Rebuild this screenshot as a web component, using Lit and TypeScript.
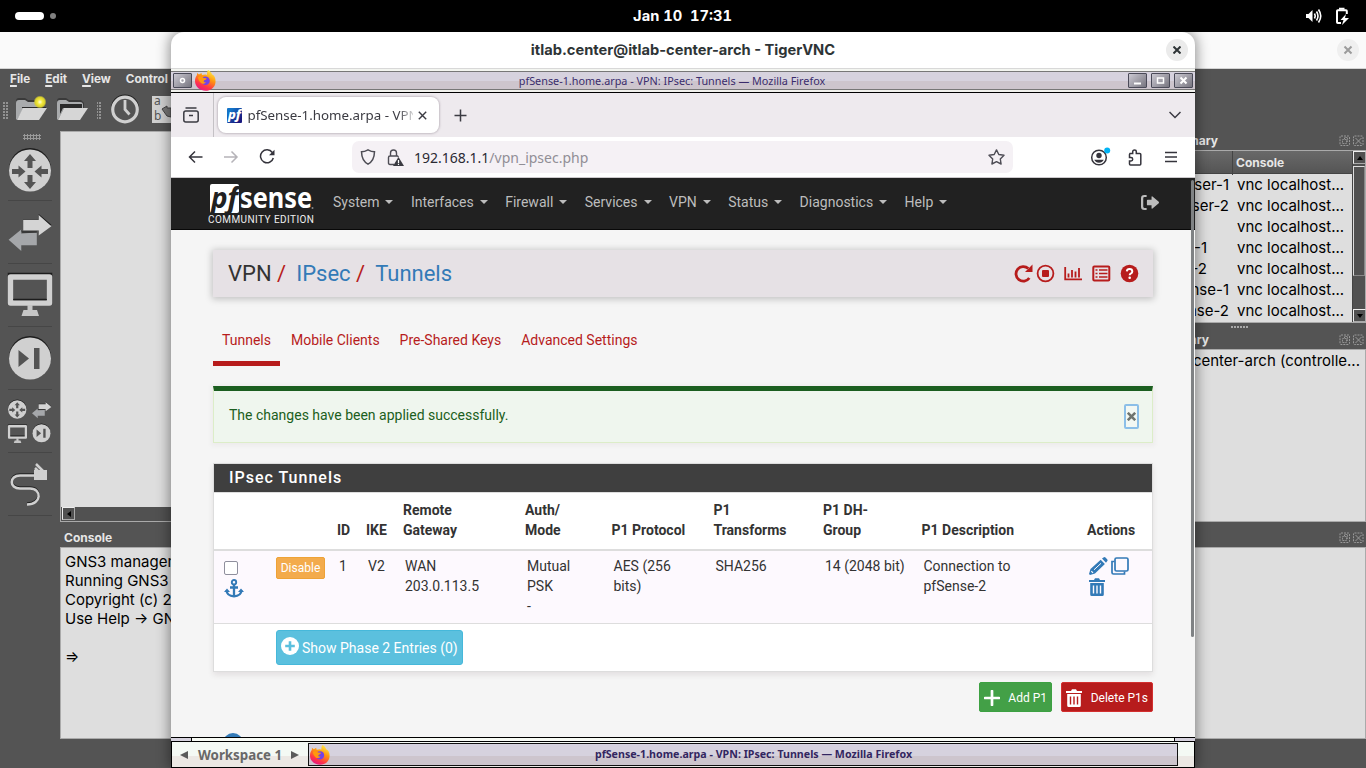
import { LitElement, html, css, svg } from "lit";
import { customElement } from "lit/decorators.js";

const firefoxIcon = html`
  <svg class="firefox" viewBox="0 0 21 21">
    <defs>
      <linearGradient id="flame" x1="0.8" y1="0" x2="0.3" y2="1">
        <stop offset="0" stop-color="#fff44f" />
        <stop offset="0.4" stop-color="#ff980e" />
        <stop offset="0.75" stop-color="#ff3647" />
        <stop offset="1" stop-color="#e31587" />
      </linearGradient>
    </defs>
    <path
      fill="url(#flame)"
      d="M13 0c2 1 3.5 2.500 4 4.500 2 .5 4 3.500 3.500 8-.5 5-5 8.300-10 8.300S0 17 0 11c0-2.500.8-4.500 2-6V3l2 1.500L6.500 3l.5 2c2-.8 4.500-.8 5 0C12 3 12 1.500 13 0z"
    />
    <circle cx="10.500" cy="10.800" r="4.300" fill="#7542e5" />
    <path
      fill="#ff980e"
      d="M3 7c2-.8 4-.5 5.500 1l3 .2c.3 1.400-1.500 1.600-2.500 2.200-.8 1.200.2 2.200 2 1.600-1 2-3.800 2.500-5.500.5C4 11 3 9 3 7z"
    />
  </svg>
`;

const routerShape = svg`
  <circle cx="21" cy="20" r="21" fill="#1c1c1c" />
  <circle cx="21" cy="21.500" r="21" fill="#d0d0d0" />
  <path
    fill="#545454"
    d="M21 5l6 7h-3.500v7h-5v-7H15zM21 40l6-7h-3.500v-7h-5v7H15zM16.500 22.500l-7 6V25H3v-5h6.500v-3.500zM25.500 22.500l7-6V20H39v5h-6.500v3.500z"
  />
`;

const switchShape = svg`
  <path fill="#1c1c1c" d="M15 4h16V-1l13 11-13 9V16H15z" />
  <path fill="#a5a7aa" d="M29 18v13H13v6L0 25.500 13 15v4z" />
  <path fill="#1c1c1c" d="M13 15l1 3h15v-1H13z" />
  <path fill="#d4d4d4" d="M15 5h16V0l13 11.500L31 21v-5H15z" />
`;

const monitorShape = svg`
  <rect x="2.500" y="1.500" width="39" height="26" fill="none" stroke="#1c1c1c" stroke-width="5.500" />
  <rect
    x="2.500"
    y="3"
    width="39"
    height="26"
    fill="none"
    stroke="#d0d0d0"
    stroke-width="5.500"
    stroke-linejoin="round"
  />
  <path fill="#1c1c1c" d="M5.300 25h33.400v1.300H5.300z" />
  <path fill="#c6c6c6" d="M19.500 31h5v5h4.500l2 6H13.500l2-6h4z" />
`;

const deviceShape = svg`
  <circle cx="21" cy="20" r="21" fill="#1c1c1c" />
  <circle cx="21" cy="21.500" r="21" fill="#d0d0d0" />
  <path fill="#545454" d="M9.500 13l10.500 8.500-10.500 8.500zM25 11h5.500v21H25z" />
`;

const floatIcons = html`
  <svg class="float-icons" viewBox="0 0 25 12">
    <g fill="none" stroke="#999" stroke-width="1">
      <rect x="1" y="1" width="9.500" height="9.500" rx="1" stroke-dasharray="2 1" />
      <path d="M3.500 8.500v-4h4v4zM5.500 4V2.500h3V6.500H7.500" stroke-dasharray="1 .6" />
      <rect x="14.500" y="1" width="9.500" height="9.500" rx="1" stroke-dasharray="2 1" />
      <path d="M16.500 3l6 6M22.500 3l-6 6" />
    </g>
  </svg>
`;

@customElement("gns3-window")
export class Gns3Window extends LitElement {
  static styles = css`
    :host {
      display: flex;
      flex-direction: column;
      height: 736px;
      background: #545454;
      color: #000;
      font-family: Inter, "Liberation Sans", sans-serif;
      font-size: 15px;
    }

    * {
      box-sizing: border-box;
    }

    svg {
      display: block;
      flex: none;
      overflow: visible;
    }

    .titlebar {
      height: 37px;
      flex: none;
      background: #fafafa;
      border-bottom: 1px solid #d4d4d4;
      display: flex;
      align-items: center;
      justify-content: flex-end;
      padding-right: 7px;
    }

    .close {
      width: 22px;
      height: 22px;
      border-radius: 50%;
      background: #efefef;
      display: grid;
      place-items: center;
    }

    .menu {
      height: 21px;
      flex: none;
      display: flex;
      gap: 15px;
      padding-left: 10px;
      font-size: 11.700px;
      font-weight: 700;
      line-height: 20px;
      color: #e6e6e6;
    }

    .mnemonic {
      text-decoration: underline;
      text-decoration-thickness: 2px;
      text-underline-offset: 2px;
    }

    .toolbar {
      height: 41px;
      flex: none;
    }

    .body {
      flex: 1;
      min-height: 0;
      display: flex;
    }

    .devices {
      width: 60px;
      display: flex;
      flex-direction: column;
      align-items: center;
    }

    .handle {
      width: 18px;
      height: 6px;
      margin: 3px 0 0 4px;
      background: radial-gradient(circle, #999 1px, transparent 1.100px) 0 0 / 3px 3px;
    }

    .device {
      width: 44px;
      height: 63.100px;
      display: grid;
      place-items: center;
      border-bottom: 1px solid #464646;
    }

    .device:nth-child(2) {
      height: 61px;
    }

    .main {
      flex: 1;
      min-width: 0;
      display: flex;
      flex-direction: column;
    }

    .upper {
      height: 391px;
      display: flex;
    }

    .scene {
      flex: 1;
      display: flex;
      flex-direction: column;
      justify-content: flex-end;
      background: #dedede;
      border: 1px solid #aaa;
    }

    .hscroll {
      height: 14px;
      background: #515151;
      padding: 0 1px;
    }

    .arrow {
      width: 13px;
      height: 13px;
      border: 1px solid #eee;
      border-right-color: #aaa;
      border-bottom-color: #aaa;
      display: grid;
      place-items: center;
      color: #1d1d1d;
    }

    .docks {
      width: 266px;
      display: flex;
      flex-direction: column;
    }

    .dock-title {
      height: 19px;
      display: flex;
      align-items: center;
      justify-content: space-between;
      color: #e6e6e6;
      font-size: 12px;
      font-weight: 700;
      padding-right: 2px;
    }

    .dock-title .name {
      width: 118px;
      text-align: right;
    }

    .dock-title .name.servers {
      width: 109px;
    }

    .float-icons {
      width: 25px;
      height: 12px;
    }

    .topology {
      height: 173px;
      display: flex;
      border: 1px solid #aaa;
      background: #dedede;
    }

    .nodes {
      flex: 1;
      overflow: hidden;
    }

    .columns {
      height: 23px;
      display: grid;
      grid-template-columns: 131px 1fr;
      background: linear-gradient(#696969, #555);
      border-bottom: 1px solid #444;
      color: #e6e6e6;
      font-size: 12px;
      font-weight: 700;
      line-height: 24px;
    }

    .columns .console-head {
      border-left: 1px solid #444;
      padding-left: 3px;
    }

    .node {
      height: 21px;
      display: grid;
      grid-template-columns: 128px 1fr;
      gap: 8px;
      line-height: 21px;
      white-space: nowrap;
    }

    .node .label {
      text-align: right;
    }

    .node .label.inset {
      padding-right: 22px;
    }

    .vscroll {
      width: 13px;
      background: #515151;
      border-left: 1px solid #444;
      display: flex;
      flex-direction: column;
      gap: 2px;
    }

    .thumb {
      height: 110px;
      border: 1px solid #ddd;
      border-right-color: #888;
      border-bottom-color: #888;
    }

    .vscroll .arrow:last-child {
      margin-top: auto;
    }

    .splitter {
      height: 7px;
      margin-left: 131px;
      padding-top: 3px;
    }

    .splitter i {
      display: block;
      width: 17px;
      height: 2px;
      background: repeating-linear-gradient(90deg, #aaa 0 2px, transparent 2px 3px);
    }

    .servers-list {
      flex: 1;
      border: 1px solid #aaa;
      background: #dedede;
      line-height: 22px;
      text-align: right;
      padding-right: 5px;
    }

    .console-title {
      height: 25px;
      padding: 6px 2px 0 4px;
      display: flex;
      justify-content: space-between;
      align-items: center;
      color: #e6e6e6;
      font-size: 12px;
      font-weight: 700;
    }

    .console {
      height: 192px;
      border: 1px solid #aaa;
      background: #dedede;
      padding: 4px;
      line-height: 19px;
      white-space: pre;
    }
  `;

  private nodes = [
    ["User-1", ""],
    ["User-2", ""],
    ["", ""],
    ["WAN-1", "inset"],
    ["WAN-2", "inset"],
    ["pfSense-1", ""],
    ["pfSense-2", ""],
  ];

  private renderToolbar() {
    return html`
      <svg class="toolbar" width="171" height="41" viewBox="0 0 171 41">
        <defs>
          <pattern id="dots" width="3" height="3" patternUnits="userSpaceOnUse">
            <rect width="2" height="2" fill="#929292" />
          </pattern>
          <radialGradient id="glow">
            <stop offset="0" stop-color="#fffde0" />
            <stop offset="0.4" stop-color="#f3e93c" />
            <stop offset="0.75" stop-color="#d8cf2e" />
            <stop offset="1" stop-color="#d8cf2e" stop-opacity="0" />
          </radialGradient>
        </defs>
        <rect x="3" y="11" width="5" height="18" fill="url(#dots)" />
        <rect x="97" y="11" width="5" height="18" fill="url(#dots)" />
        <path fill="#3a3a3a" d="M16 11q0-3 3-3h6l3 2h11l3 3v6H24L16 28z" />
        <path fill="#a9abad" d="M16 13q0-3 3-3h6l3 2h10q3 0 3 3v3H24l-7 12-1-1z" />
        <path fill="#2a2a2a" d="M22 17h24v1H22z" />
        <path fill="#d6d6d6" d="M23 18h24l-8 12H17z" />
        <circle cx="40" cy="12" r="6.500" fill="url(#glow)" />
        <path fill="#3a3a3a" d="M57 11q0-3 3-3h6l3 2h12l3 3v5H66L57 28z" />
        <path fill="#a9abad" d="M57 13q0-3 3-3h6l3 2h11q3 0 3 3v3H64l-6 12-1-1z" />
        <path fill="#2a2a2a" d="M60 14h22v4H63l-3 6z" />
        <path fill="#d6d6d6" d="M64 18h24l-8 12H58z" />
        <circle cx="125" cy="18.500" r="14" fill="#1e1e1e" />
        <circle cx="125" cy="19.500" r="12.300" fill="#545454" stroke="#d0d0d0" stroke-width="3.200" />
        <path d="M125 10v9.500l4.500 5" fill="none" stroke="#d0d0d0" stroke-width="2.800" />
        <path fill="#d0d0d0" d="M152 6h19v27h-19z" />
        <g fill="#555" font-family="Noto Sans" font-size="12">
          <text x="154" y="14.500">a</text>
          <text x="154" y="30">b</text>
        </g>
        <path fill="#777" stroke="#444" d="M162 19l5-3v2h4v9l-4-1z" />
      </svg>
    `;
  }

  render() {
    return html`
      <div class="titlebar">
        <div class="close">
          <svg width="8" height="8" viewBox="0 0 8 8">
            <path d="M.5.5l7 7M7.500.5l-7 7" stroke="#9b9b9b" stroke-width="2" />
          </svg>
        </div>
      </div>
      <div class="menu">
        <span><span class="mnemonic">F</span>ile</span>
        <span><span class="mnemonic">E</span>dit</span>
        <span><span class="mnemonic">V</span>iew</span>
        <span>Control</span>
      </div>
      ${this.renderToolbar()}
      <div class="body">
        <div class="devices">
          <div class="handle"></div>
          <div class="device">
            <svg width="42" height="43" viewBox="0 0 42 43">${routerShape}</svg>
          </div>
          <div class="device">
            <svg width="44" height="35" viewBox="0 0 44 36">${switchShape}</svg>
          </div>
          <div class="device">
            <svg width="44" height="42" viewBox="0 0 44 42">${monitorShape}</svg>
          </div>
          <div class="device">
            <svg width="42" height="43" viewBox="0 0 42 43">${deviceShape}</svg>
          </div>
          <div class="device">
            <svg width="44" height="43" viewBox="0 0 44 43">
              <g transform="translate(0 0) scale(.44)">${routerShape}</g>
              <g transform="translate(24 2) scale(.44)">${switchShape}</g>
              <g transform="translate(0 25) scale(.43)">${monitorShape}</g>
              <g transform="translate(24.500 24) scale(.43)">${deviceShape}</g>
            </svg>
          </div>
          <div class="device">
            <svg width="44" height="44" viewBox="0 0 44 44">
              <path
                d="M27 12.500H12c-11 0-11 13 0 13h10c12 0 12 16-3 16"
                fill="none"
                stroke="#222"
                stroke-width="2.500"
              />
              <path
                d="M27 13.500H12c-11 0-11 13 0 13h10c12 0 12 16-3 16M28 2l7 7M27 6l4 4"
                fill="none"
                stroke="#d0d0d0"
                stroke-width="2.500"
              />
              <path fill="#d0d0d0" d="M26 8h13v10H26z" />
            </svg>
          </div>
        </div>
        <div class="main">
          <div class="upper">
            <div class="scene">
              <div class="hscroll">
                <div class="arrow">
                  <svg width="4" height="6"><path d="M4 0v6L0 3z" /></svg>
                </div>
              </div>
            </div>
            <div class="docks">
              <div class="dock-title">
                <span class="name">Topology Summary</span>
                ${floatIcons}
              </div>
              <div class="topology">
                <div class="nodes">
                  <div class="columns">
                    <span></span>
                    <span class="console-head">Console</span>
                  </div>
                  ${this.nodes.map(
                    ([name, align]) => html`
                      <div class="node">
                        <span class="label ${align}">${name}</span>
                        <span>vnc localhost...</span>
                      </div>
                    `
                  )}
                </div>
                <div class="vscroll">
                  <div class="arrow">
                    <svg width="6" height="4"><path d="M0 4h6L3 0z" /></svg>
                  </div>
                  <div class="thumb"></div>
                  <div class="arrow">
                    <svg width="6" height="4"><path d="M0 0h6L3 4z" /></svg>
                  </div>
                </div>
              </div>
              <div class="splitter"><i></i></div>
              <div class="dock-title">
                <span class="name servers">Servers Summary</span>
                ${floatIcons}
              </div>
              <div class="servers-list">itlab-center-arch (controlle...</div>
            </div>
          </div>
          <div class="console-title">
            <span>Console</span>
            ${floatIcons}
          </div>
          <div class="console">GNS3 management
Running GNS3 version
Copyright (c) 2006
Use Help → GNS3

⇒</div>
        </div>
      </div>
    `;
  }
}

@customElement("pfsense-page")
export class PfsensePage extends LitElement {
  static styles = css`
    :host {
      display: block;
      height: 559px;
      overflow: hidden;
      position: relative;
      background: #f5f5f5;
      color: #333;
      font-family: Roboto, "Liberation Sans", sans-serif;
      font-size: 14px;
      line-height: 20px;
    }

    * {
      box-sizing: border-box;
    }

    svg {
      display: block;
      flex: none;
    }

    .navbar {
      height: 52px;
      background: #212121;
      border-bottom: 1px solid #080808;
      display: flex;
      align-items: center;
      padding: 0 36px 3px 37px;
      color: #bdbdbd;
    }

    .logo {
      width: 107px;
      margin: 5px 18px 0 0;
      overflow: visible;
    }

    .menu {
      display: flex;
      gap: 17.450px;
      flex: 1;
    }

    .entry {
      display: flex;
      align-items: center;
      gap: 6px;
    }

    .caret {
      border: 4px solid transparent;
      border-top-color: #bdbdbd;
      border-bottom: 0;
    }

    .content {
      padding: 20px 42px 0;
    }

    .header {
      height: 47px;
      padding: 0 14px 0 15px;
      display: flex;
      align-items: center;
      justify-content: space-between;
      background: #e6e1e5;
      box-shadow: 0 1px 7px 1px rgba(0, 0, 0, 0.22);
      font-size: 22px;
    }

    .crumbs {
      display: flex;
    }

    .crumbs a {
      color: #337ab7;
      margin-left: 10px;
    }

    .slash {
      color: #b71c1c;
      margin-left: 5.500px;
    }

    .tabs {
      display: flex;
      margin-top: 33px;
      gap: 2px;
      color: #b71c1c;
    }

    .tab {
      height: 36px;
      padding: 0 9px;
    }

    .tab.active {
      border-bottom: 5px solid #b71c1c;
    }

    .alert {
      margin-top: 20px;
      height: 57px;
      padding: 13px 13px 0 15px;
      display: flex;
      align-items: flex-start;
      justify-content: space-between;
      background: #eff6ee;
      border: 1px solid #dcedc8;
      border-top: 5px solid #1b5e20;
      box-shadow: 0 1px 5px 2px rgba(60, 0, 30, 0.04);
      color: #1b5e20;
    }

    .message {
      padding-top: 1px;
    }

    .dismiss {
      width: 15px;
      height: 25px;
      border: 2px solid #8cbfe8;
      border-radius: 2px;
      background: #f3f8f3;
      display: grid;
      place-items: center;
    }

    .panel {
      margin-top: 20px;
      height: 209px;
      background: #fff;
      border: 1px solid #ddd;
      box-shadow: 0 3px 6px rgba(40, 0, 20, 0.09);
    }

    .panel-title {
      height: 29px;
      padding: 4px 15px;
      background: #3f3f3f;
      border-bottom: 1px solid #ddd;
      color: #fff;
      font-size: 16px;
      font-weight: 500;
      letter-spacing: 1px;
      line-height: 19px;
    }

    .row {
      display: grid;
      grid-template-columns: 52px 61px 29px 37px 122px 86.500px 102px 109.500px 98.500px 165.500px 1fr;
      padding-left: 10px;
    }

    .head {
      height: 58px;
      padding-bottom: 9px;
      align-items: end;
      border-bottom: 2px solid #ddd;
      font-weight: 700;
    }

    .tunnel {
      height: 73px;
      padding-top: 5px;
      background: #fdf9fe;
      border-bottom: 1px solid #ddd;
    }

    .text {
      padding-left: 2px;
    }

    .checkbox {
      width: 14px;
      height: 14px;
      margin: 5px 0 4px;
      border: 1px solid #8f8f9d;
      border-radius: 2px;
      background: #fff;
    }

    .disable {
      width: 49px;
      height: 22px;
      margin-top: 1px;
      border: 1px solid #eea236;
      border-radius: 2px;
      background: #f3ab4c;
      color: #fff;
      font-size: 12px;
      text-align: center;
    }

    .actions {
      display: flex;
      flex-wrap: wrap;
      align-content: flex-start;
      gap: 3px;
      width: 44px;
      padding: 1px 0 0 2px;
      color: #337ab7;
    }

    .phase2 {
      width: 187px;
      height: 35px;
      margin: 6px 0 0 62px;
      padding: 0 5px 0 4px;
      display: flex;
      align-items: center;
      gap: 3px;
      border: 1px solid #46b8da;
      border-radius: 3px;
      background: #5bc0de;
      color: #fff;
      white-space: nowrap;
    }

    .phase2 svg {
      margin-bottom: 3px;
    }

    .buttons {
      display: flex;
      justify-content: flex-end;
      gap: 9px;
      margin-top: 10px;
    }

    .button {
      height: 30px;
      padding: 2px 4px 0;
      display: flex;
      align-items: center;
      justify-content: space-between;
      border-radius: 2px;
      color: #fff;
      font-size: 12px;
    }

    .add {
      width: 73px;
      background: #43a047;
      border: 1px solid #3da142;
    }

    .delete {
      width: 92px;
      background: #b71c1c;
      border: 1px solid #d32f2f;
    }

    .info {
      width: 20px;
      height: 20px;
      margin: 21px 0 0 10px;
      border-radius: 50%;
      background: #337ab7;
    }

    .scrollbar {
      position: absolute;
      right: 1px;
      top: 2px;
      width: 3px;
      height: 457px;
      border-radius: 2px;
      background: #7f8284;
    }
  `;

  private menu = [
    "System",
    "Interfaces",
    "Firewall",
    "Services",
    "VPN",
    "Status",
    "Diagnostics",
    "Help",
  ];

  private renderLogo() {
    return html`
      <svg class="logo" height="42" viewBox="0 0 107 42">
        <path fill="#fff" d="M2 2q0-2 2-2h25q2 0 2 2v25q0 2-2 2H4q-2 0-2-2z" />
        <g font-family="Noto Sans" font-weight="700">
          <text
            x="3"
            y="23.500"
            fill="#212121"
            font-size="28"
            font-style="italic"
            textLength="27"
            lengthAdjust="spacingAndGlyphs"
          >pf</text>
          <text
            x="32"
            y="24"
            fill="#fff"
            font-size="29"
            textLength="72"
            lengthAdjust="spacingAndGlyphs"
          >sense</text>
        </g>
        <circle cx="104.500" cy="24" r="1" fill="#888" />
        <text
          x="0"
          y="39"
          fill="#eee"
          font-family="Roboto"
          font-size="10"
          textLength="106"
        >COMMUNITY EDITION</text>
      </svg>
    `;
  }

  private renderHeaderIcons() {
    return html`
      <svg width="125" height="19" viewBox="0 0 125 19" fill="none" stroke="#b71c1c">
        <path d="M14.300 4.500a7.300 7.300 0 1 0 1 9.500" stroke-width="2.800" />
        <path d="M18.500.500v7.500H11z" fill="#b71c1c" stroke="none" />
        <circle cx="31.500" cy="9.500" r="7.900" stroke-width="1.800" />
        <rect x="28" y="6" width="7" height="7" rx="1" fill="#b71c1c" stroke="none" />
        <path
          d="M51.200 3v12.300H68M54.500 13.500V9.500M58 13.500V6M61.500 13.500V7.500M65 13.500V4"
          stroke-width="1.800"
        />
        <rect x="79.300" y="2.500" width="16" height="14" rx="1" stroke-width="2" />
        <path d="M81.500 6h2M81.500 9.500h2M81.500 13h2M85 6h8.500M85 9.500h8.500M85 13h8.500" stroke-width="1.700" />
        <circle cx="115.500" cy="9.500" r="8.800" fill="#b71c1c" stroke="none" />
        <path
          d="M112.800 7.300q.3-2.300 2.700-2.300 2.800 0 2.800 2.400 0 1.400-1.600 2.200-1 .5-1 1.600"
          stroke="#fff"
          stroke-width="2"
        />
        <circle cx="115.700" cy="13.700" r="1.300" fill="#fff" stroke="none" />
      </svg>
    `;
  }

  private renderTrash(slots: string) {
    return html`
      <svg width="16" height="18" viewBox="0 0 16 18">
        <path fill="currentColor" d="M0 2h5l1-1.800h4L11 2h5v2H0zM1.200 5h13.600v11.500q0 1.500-1.500 1.500H2.700q-1.500 0-1.500-1.500z" />
        <path d="M4.500 7.500v8M8 7.500v8M11.500 7.500v8" stroke=${slots} stroke-width="1.400" />
      </svg>
    `;
  }

  render() {
    return html`
      <div class="navbar">
        ${this.renderLogo()}
        <div class="menu">
          ${this.menu.map(
            (name) => html`<span class="entry">${name}<i class="caret"></i></span>`
          )}
        </div>
        <svg width="18" height="17" viewBox="0 0 512 512" preserveAspectRatio="none">
          <path
            fill="#bdbdbd"
            d="M300 92q0-34 27-14L505 235q14 20 0 40L327 434q-27 20-27-14v-78H190q-22 0-22-22V192q0-22 22-22h110zM160 32v62H96q-32 0-32 34v256q0 34 32 34h64v62H96Q0 480 0 384V128Q0 32 96 32z"
          />
        </svg>
      </div>
      <div class="content">
        <div class="header">
          <div class="crumbs">
            <span>VPN</span><span class="slash">/</span><a>IPsec</a
            ><span class="slash">/</span><a>Tunnels</a>
          </div>
          ${this.renderHeaderIcons()}
        </div>
        <div class="tabs">
          <span class="tab active">Tunnels</span>
          <span class="tab">Mobile Clients</span>
          <span class="tab">Pre-Shared Keys</span>
          <span class="tab">Advanced Settings</span>
        </div>
        <div class="alert">
          <span class="message">The changes have been applied successfully.</span>
          <div class="dismiss">
            <svg width="9" height="9" viewBox="0 0 9 9">
              <path d="M.8.8l7.400 7.400M8.200.8L.8 8.200" stroke="#6f746f" stroke-width="2.600" />
            </svg>
          </div>
        </div>
        <div class="panel">
          <div class="panel-title">IPsec Tunnels</div>
          <div class="row head">
            <span></span>
            <span></span>
            <span>ID</span>
            <span>IKE</span>
            <span>Remote<br />Gateway</span>
            <span>Auth/<br />Mode</span>
            <span>P1 Protocol</span>
            <span>P1<br />Transforms</span>
            <span>P1 DH-<br />Group</span>
            <span>P1 Description</span>
            <span>Actions</span>
          </div>
          <div class="row tunnel">
            <div>
              <div class="checkbox"></div>
              <svg width="20" height="19" viewBox="0 0 20 19" fill="none" stroke="#337ab7">
                <circle cx="10" cy="3.200" r="2.200" stroke-width="1.900" />
                <path d="M10 5.500v12M6 8.500h8" stroke-width="2.300" />
                <path d="M2.500 11.500q.5 5.500 7.500 5.800 7-.3 7.500-5.800" stroke-width="2.300" />
                <path d="M0 13l3-3.500L6 13zM14 13l3-3.500 3 3.500z" fill="#337ab7" stroke="none" />
              </svg>
            </div>
            <div class="disable">Disable</div>
            <span class="text">1</span>
            <span class="text">V2</span>
            <span class="text">WAN<br />203.0.113.5</span>
            <span class="text">Mutual<br />PSK<br />-</span>
            <span class="text">AES (256<br />bits)</span>
            <span class="text">SHA256</span>
            <span class="text">14 (2048 bit)</span>
            <span class="text">Connection to<br />pfSense-2</span>
            <div class="actions">
              <svg width="19" height="18" viewBox="0 0 19 18">
                <path
                  fill="currentColor"
                  d="M11.700 2.700l4.200 4.200L6 16.500 1 18 0 17l1.500-5zM13 1.500L14.500.4q1-.8 2 .2l1.600 1.600q1 1 0 2L17 5.700z"
                />
                <path d="M5 12.800L12 6.300" stroke="#fdf9fe" stroke-width="1" />
                <path d="M2.300 14.200l1.700 1.700" stroke="#fdf9fe" stroke-width="1.200" />
              </svg>
              <svg width="18" height="18" viewBox="0 0 18 18" fill="none" stroke="currentColor" stroke-width="1.700">
                <rect x="4" y="1" width="13" height="13" rx="1.500" />
                <path d="M3.500 4.500H1v11q0 1.500 1.500 1.500h11v-2.500" />
              </svg>
              ${this.renderTrash("#fdf9fe")}
            </div>
          </div>
          <div class="phase2">
            <svg width="18" height="18" viewBox="0 0 18 18">
              <circle cx="9" cy="9" r="9" fill="#fff" />
              <path d="M9 4.200v9.600M4.200 9h9.600" stroke="#5bc0de" stroke-width="2.600" />
            </svg>
            Show Phase 2 Entries (0)
          </div>
        </div>
        <div class="buttons">
          <div class="button add">
            <svg width="16" height="16" viewBox="0 0 16 16">
              <path d="M8 1v14M1 8h14" stroke="#fff" stroke-width="2.700" stroke-linecap="round" />
            </svg>
            Add P1
          </div>
          <div class="button delete">${this.renderTrash("#b71c1c")} Delete P1s</div>
        </div>
        <div class="info"></div>
      </div>
      <div class="scrollbar"></div>
    `;
  }
}

@customElement("vnc-window")
export class VncWindow extends LitElement {
  static styles = css`
    :host {
      display: flex;
      flex-direction: column;
      width: 1024px;
      height: 736px;
      border-radius: 13px 13px 0 0;
      background: #fff;
      box-shadow: 0 0 14px 1px rgba(0, 0, 0, 0.45);
      font-family: "Noto Sans", sans-serif;
    }

    * {
      box-sizing: border-box;
    }

    svg {
      display: block;
      flex: none;
    }

    .titlebar {
      height: 37px;
      padding: 0 7px 1px 29px;
      display: flex;
      align-items: center;
      border-bottom: 1px solid #d8d8d8;
      color: #2e3436;
      font-family: Inter, sans-serif;
      font-size: 14.670px;
      font-weight: 700;
    }

    .title {
      flex: 1;
      text-align: center;
    }

    .close {
      width: 22px;
      height: 22px;
      border-radius: 50%;
      background: #ebebeb;
      display: grid;
      place-items: center;
    }

    .wm {
      height: 24px;
      border-top: 2px solid #f3f5f0;
      border-bottom: 1px solid #000;
      background: #f0f0ec;
      padding-bottom: 2px;
    }

    .wm-bar {
      height: 19px;
      border-top: 1px solid #777;
      border-bottom: 1px solid #777;
      background: linear-gradient(#d6d2de 0 9px, #cdc5cd 9px);
      display: flex;
      align-items: center;
      padding: 0 2px;
      gap: 4px;
    }

    .wm-bar .firefox {
      margin-left: -1px;
    }

    .wm-title {
      flex: 1;
      text-align: center;
      color: #3a2c6c;
      font-size: 10.830px;
      line-height: 17px;
    }

    .wm-button {
      width: 19px;
      height: 15px;
      border: 1px solid #4a4a58;
      border-radius: 1px;
      background: linear-gradient(135deg, #cbc9d2, #77757f);
      display: grid;
      place-items: center;
    }

    .firefox {
      width: 21px;
      height: 21px;
    }

    .tabstrip {
      height: 44px;
      background: #eeeaee;
      display: flex;
      align-items: center;
      color: #3b3b42;
    }

    .recent {
      width: 43px;
      height: 44px;
      padding-left: 12px;
      border-right: 1px solid #c4c1c5;
      display: flex;
      align-items: center;
    }

    .tab {
      width: 221px;
      height: 36px;
      margin: 0 15px 0 4px;
      padding: 0 12px 0 9px;
      border-radius: 8px;
      background: #fff;
      box-shadow: 0 0 2px 1px rgba(120, 110, 120, 0.35);
      display: flex;
      align-items: center;
      gap: 5.500px;
      font-size: 13.330px;
    }

    .tab svg {
      overflow: visible;
    }

    .tab-label {
      flex: 1;
      overflow: hidden;
      white-space: nowrap;
      mask-image: linear-gradient(90deg, #000 150px, transparent 169px);
    }

    .chevron {
      margin: 0 14px 0 auto;
    }

    .nav {
      height: 41px;
      border-bottom: 1px solid #ccc9cc;
      display: flex;
      align-items: center;
      background: #fff;
      padding: 0 16px 0 17px;
    }

    .url {
      width: 661px;
      height: 32px;
      margin: 0 77px 0 76px;
      padding: 0 8px;
      border-radius: 7px;
      background: #f5f1f5;
      display: flex;
      align-items: center;
      font-size: 14px;
      color: #2b2a33;
    }

    .lock {
      margin-left: 11px;
    }

    .address {
      flex: 1;
      margin: 1px 0 0 10px;
    }

    .path {
      color: #918e96;
    }

    .frame {
      height: 4px;
      border-top: 1px solid #000;
      display: flex;
      justify-content: space-between;
      background: #f8fbf5;
    }

    .grip {
      width: 21px;
      background: #d6d2de;
      border-right: 1px solid #000;
    }

    .grip.right {
      border-right: 0;
      border-left: 1px solid #000;
    }

    .taskbar {
      height: 27px;
      border: 1px solid #000;
      background: linear-gradient(#f4f9f4 0 14px, #ece8e4 14px);
      display: flex;
      align-items: center;
      padding: 0 16px 0 8px;
      color: #686868;
    }

    .workspace {
      width: 84px;
      margin: 1px 9px 0 10px;
      font-size: 13.300px;
      font-weight: 700;
      white-space: nowrap;
      line-height: 24px;
    }

    .task {
      width: 870px;
      height: 23px;
      margin-left: auto;
      border: 1px solid #111;
      background: linear-gradient(#d6d2de 0 12px, #cdc5cd 12px);
      display: flex;
      align-items: center;
      color: #33265f;
      font-weight: 700;
    }

    .task .wm-title {
      color: inherit;
      font-size: 10.670px;
      line-height: 21px;
    }

    .task .firefox {
      width: 20px;
      height: 20px;
      margin-left: 1px;
    }
  `;

  private pageTitle = "pfSense-1.home.arpa - VPN: IPsec: Tunnels — Mozilla Firefox";

  private renderTabs() {
    return html`
      <div class="tabstrip">
        <div class="recent">
          <svg width="16" height="16" viewBox="0 0 16 16" fill="none" stroke="#3b3b42" stroke-width="1.500">
            <path d="M2.500 1h11" />
            <rect x=".8" y="4" width="14.400" height="11" rx="2" />
            <path d="M6 8.500h4" />
          </svg>
        </div>
        <div class="tab">
          <svg width="15" height="15" viewBox="0 0 15 15">
            <defs>
              <linearGradient id="favicon" x1="0" y1="0" x2="1" y2="1">
                <stop offset="0.2" stop-color="#1475c9" />
                <stop offset="0.8" stop-color="#1a1a80" />
              </linearGradient>
            </defs>
            <rect width="15" height="15" rx="1" fill="url(#favicon)" />
            <text
              x="1"
              y="11"
              fill="#fff"
              font-family="Noto Sans"
              font-size="12"
              font-weight="800"
              font-style="italic"
              textLength="13"
              lengthAdjust="spacingAndGlyphs"
            >pf</text>
          </svg>
          <span class="tab-label">pfSense-1.home.arpa - VPN:</span>
          <svg width="9" height="9" viewBox="0 0 9 9">
            <path d="M.8.800l7.400 7.400M8.200.8L.8 8.200" stroke="#3b3b42" stroke-width="1.400" />
          </svg>
        </div>
        <svg width="13" height="13" viewBox="0 0 13 13">
          <path d="M6.500.5v12M.5 6.500h12" stroke="#3b3b42" stroke-width="1.500" />
        </svg>
        <svg class="chevron" width="12" height="8" viewBox="0 0 12 8">
          <path d="M.5 1L6 6.500 11.500 1" fill="none" stroke="#3b3b42" stroke-width="1.500" />
        </svg>
      </div>
    `;
  }

  private renderNav() {
    return html`
      <div class="nav">
        <svg width="88" height="16" viewBox="0 0 88 16" fill="none" stroke="#35343c" stroke-width="1.500">
          <path d="M14.500 8H1.500M7 2.500L1.500 8 7 13.500" />
          <path d="M36 8h13M43.500 2.500L49 8l-5.500 5.500" stroke="#b5b3b8" />
          <path d="M84.300 3.500A6.500 6.500 0 1 0 85.300 9" />
          <path d="M86.500.8v5.500H81z" fill="#35343c" stroke="none" />
        </svg>
        <div class="url">
          <svg width="16" height="16" viewBox="0 0 16 16" fill="none" stroke="#4e4d55" stroke-width="1.500">
            <path d="M8 .8q3.500 1.900 6.500 2-.2 9-6.500 12.400Q1.700 11.800 1.500 2.800 4.500 2.700 8 .8z" />
          </svg>
          <svg class="lock" width="17" height="17" viewBox="0 0 17 17">
            <g fill="none" stroke="#4e4d55" stroke-width="1.400">
              <path d="M7 15.500H3q-1.500 0-1.500-1.500V8.500Q1.500 7 3 7h7.500l1 1M3.500 7V4q0-3 3-3t3 3v3" />
            </g>
            <path d="M11.500 8l5.500 9H6z" fill="#3b3b42" />
            <path d="M11.500 11v3M11.500 14.800v1.200" stroke="#fff" stroke-width="1.200" />
          </svg>
          <span class="address">192.168.1.1<span class="path">/vpn_ipsec.php</span></span>
          <svg width="17" height="16" viewBox="0 0 17 16" fill="none" stroke="#4e4d55" stroke-width="1.400">
            <path
              stroke-linejoin="round"
              d="M8.500.9l2.300 4.600 5.200.8-3.700 3.700.8 5-4.600-2.300L3.900 15l.8-5L1 6.300l5.200-.8z"
            />
          </svg>
        </div>
        <svg width="89" height="20" viewBox="0 0 89 20" fill="none" stroke="#35343c" stroke-width="1.500">
          <circle cx="9" cy="10.500" r="7.300" />
          <circle cx="9" cy="8.500" r="2.700" fill="#35343c" stroke="none" />
          <path d="M4.200 12.700h9.600q-1.500 3-4.800 3t-4.800-3z" fill="#35343c" stroke="none" />
          <circle cx="17.200" cy="3.500" r="3" fill="#00b3f4" stroke="none" />
          <path
            d="M39.500 6.500h3.200V4.700q0-1.700 1.800-1.700t1.800 1.700v1.800h3.500q1 0 1 1V17q0 1-1 1h-9.300q-1 0-1-1v-3h1.500q1.700 0 1.700-1.700t-1.700-1.700h-1.500V7.500q0-1 1-1z"
          />
          <path d="M75 5.500h12M75 10h12M75 14.500h12" />
        </svg>
      </div>
    `;
  }

  render() {
    return html`
      <div class="titlebar">
        <span class="title">itlab.center@itlab-center-arch - TigerVNC</span>
        <div class="close">
          <svg width="8" height="8" viewBox="0 0 8 8">
            <path d="M.5.5l7 7M7.500.5l-7 7" stroke="#2e3436" stroke-width="2" />
          </svg>
        </div>
      </div>
      <div class="wm">
        <div class="wm-bar">
          <div class="wm-button">
            <svg width="7" height="7">
              <circle cx="3.500" cy="3.500" r="2" fill="none" stroke="#fff" stroke-width="1.500" />
            </svg>
          </div>
          ${firefoxIcon}
          <div class="wm-title">${this.pageTitle}</div>
          <div class="wm-button">
            <svg width="9" height="9"><path d="M1 7.500h7" stroke="#fff" stroke-width="2" /></svg>
          </div>
          <div class="wm-button">
            <svg width="9" height="9">
              <path d="M1.500 2h6v5h-6z" fill="none" stroke="#fff" stroke-width="1.500" />
            </svg>
          </div>
          <div class="wm-button">
            <svg width="9" height="9">
              <path d="M1.500 1.500l6 6M7.500 1.500l-6 6" stroke="#fff" stroke-width="2" />
            </svg>
          </div>
        </div>
      </div>
      ${this.renderTabs()} ${this.renderNav()}
      <pfsense-page></pfsense-page>
      <div class="frame">
        <div class="grip"></div>
        <div class="grip right"></div>
      </div>
      <div class="taskbar">
        <svg width="8" height="8"><path d="M8 0v8L0 4z" fill="#5a5a5a" /></svg>
        <span class="workspace">Workspace 1</span>
        <svg width="8" height="8"><path d="M0 0v8l8-4z" fill="#5a5a5a" /></svg>
        <div class="task">
          ${firefoxIcon}
          <div class="wm-title">${this.pageTitle}</div>
        </div>
      </div>
    `;
  }
}

@customElement("app-root")
export class AppRoot extends LitElement {
  static styles = css`
    :host {
      display: block;
      position: relative;
      width: 1366px;
      height: 768px;
      overflow: hidden;
      background: #000;
    }

    .panel {
      box-sizing: border-box;
      height: 32px;
      padding: 0 16px 0 15px;
      display: grid;
      grid-template-columns: 1fr auto 1fr;
      align-items: center;
      color: #fff;
      font-family: Inter, sans-serif;
      font-size: 14.670px;
      font-weight: 700;
      font-variant-numeric: tabular-nums;
      white-space: pre;
    }

    .workspaces {
      display: flex;
      align-items: center;
      gap: 6px;
    }

    .pill {
      width: 29px;
      height: 8px;
      border-radius: 4px;
      background: #fff;
    }

    .dot {
      width: 6px;
      height: 6px;
      border-radius: 50%;
      background: #808080;
    }

    .status {
      justify-self: end;
    }

    vnc-window {
      position: absolute;
      left: 171px;
      top: 32px;
    }
  `;

  render() {
    return html`
      <div class="panel">
        <div class="workspaces">
          <div class="pill"></div>
          <div class="dot"></div>
        </div>
        <div>Jan 10  17:31</div>
        <svg class="status" width="44" height="18" viewBox="0 0 44 18">
          <path fill="#fff" d="M0 7h2.500l4-4v12l-4-4H0z" />
          <g fill="none" stroke="#fff" stroke-width="1.600">
            <path d="M8.500 6.500q1.500 2.500 0 5M10.500 4.500q3 4.500 0 9" />
            <path d="M12.500 2.500q4.500 6.500 0 13" />
            <path d="M35 16h-3.200q-.8 0-.8-.8V4q0-.8.800-.8h8.200q.8 0 .8.800v3" stroke-width="2" />
          </g>
          <path fill="#fff" d="M33 .8h5.500v2H33zM40 7l-5.500 6h3l-1.500 5 7-7h-4z" />
        </svg>
      </div>
      <gns3-window></gns3-window>
      <vnc-window></vnc-window>
    `;
  }
}
